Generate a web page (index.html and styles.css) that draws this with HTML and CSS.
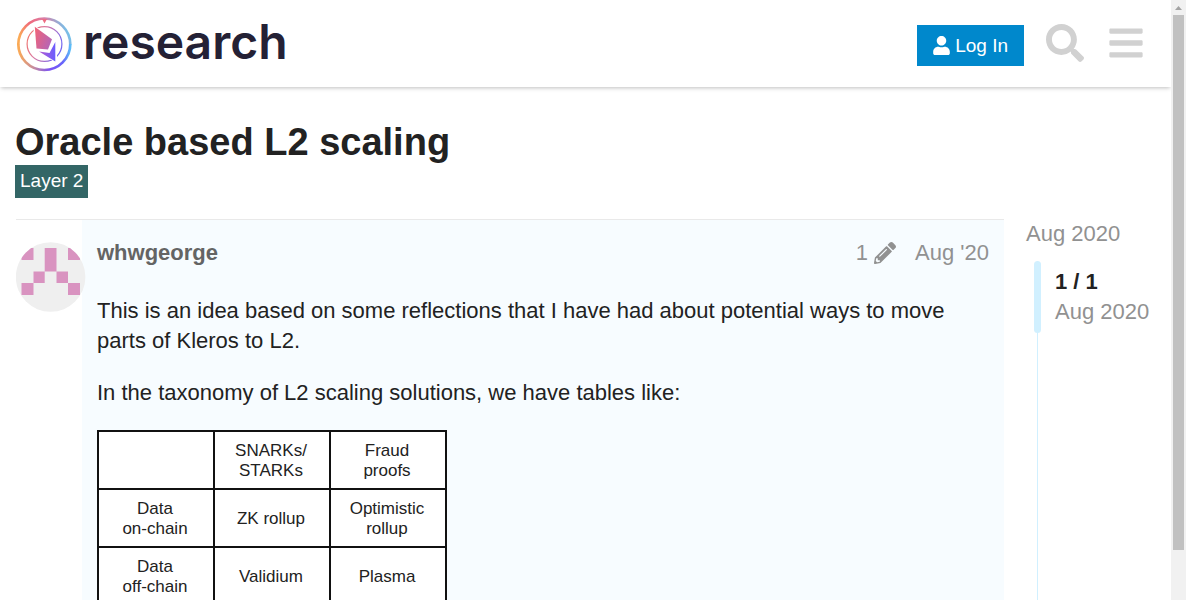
FILE: index.html
```html
<!DOCTYPE html>
<html lang="en">
<head>
<meta charset="utf-8">
<meta name="viewport" content="width=device-width, initial-scale=1">
<title>Oracle based L2 scaling - research</title>
<link rel="stylesheet" href="styles.css">
</head>
<body>
<div class="window">
  <div class="page">
    <header class="site-header">
      <a class="brand" href="#">
        <svg class="brand-mark" viewBox="0 0 56 56" aria-hidden="true">
          <defs>
            <linearGradient id="ring-warm" x1="0" y1="0.6" x2="1" y2="0.4">
              <stop offset="0" stop-color="#fbaa55"/>
              <stop offset="0.3" stop-color="#f0697c"/>
              <stop offset="0.6" stop-color="#d87fa8"/>
              <stop offset="1" stop-color="#62cdf6"/>
            </linearGradient>
            <linearGradient id="ring-cool" x1="0" y1="0.4" x2="1" y2="0.4">
              <stop offset="0" stop-color="#fbaa55"/>
              <stop offset="0.3" stop-color="#c58ca0"/>
              <stop offset="0.6" stop-color="#7a51f2"/>
              <stop offset="0.85" stop-color="#6a62fb"/>
              <stop offset="1" stop-color="#5cbcf8"/>
            </linearGradient>
            <linearGradient id="inner-ring" x1="0" y1="0" x2="1" y2="0.4">
              <stop offset="0" stop-color="#f5725f"/>
              <stop offset="0.5" stop-color="#d77aa6"/>
              <stop offset="1" stop-color="#7466ee"/>
            </linearGradient>
            <linearGradient id="gem" x1="0" y1="0.2" x2="1" y2="0.7">
              <stop offset="0" stop-color="#f0637a"/>
              <stop offset="1" stop-color="#b366b8"/>
            </linearGradient>
            <linearGradient id="gem-tail" x1="0" y1="0" x2="1" y2="0">
              <stop offset="0" stop-color="#b55dd0"/>
              <stop offset="1" stop-color="#6a5cff"/>
            </linearGradient>
          </defs>
          <path d="M2.300 28.500A26 26 0 1 1 54.300 28.500" fill="none" stroke="url(#ring-warm)" stroke-width="2.700"/>
          <path d="M2.300 28A26 26 0 0 0 54.300 28" fill="none" stroke="url(#ring-cool)" stroke-width="2.700"/>
          <path d="M26 3h5L28.500 7.500z" fill="#ee6c83"/>
          <circle cx="28.500" cy="28" r="17.400" fill="none" stroke="url(#inner-ring)" stroke-width="1.200"/>
          <path d="M17 9L38 21L34 34L41 25L41 47L20 35z" fill="#fff"/>
          <path d="M18.800 10.800L36 23.300L32 33.500L20.500 32.500z" fill="url(#gem)"/>
          <path d="M39.300 26V45.600L23 35.600L33.500 37z" fill="url(#gem-tail)"/>
        </svg>
        <span class="brand-name">research</span>
      </a>
      <nav class="header-tools" aria-label="Site">
        <button class="login" type="button">
          <svg class="login-icon" viewBox="0 0 448 512" aria-hidden="true"><path fill="currentColor" d="M224 256c70.700 0 128-57.300 128-128S294.700 0 224 0 96 57.300 96 128s57.300 128 128 128zm89.600 32h-16.700c-22.200 10.200-46.900 16-72.900 16s-50.600-5.800-72.900-16h-16.700C60.200 288 0 348.200 0 422.400V464c0 26.500 21.500 48 48 48h352c26.500 0 48-21.500 48-48v-41.600c0-74.200-60.200-134.400-134.400-134.400z"/></svg>
          <span>Log In</span>
        </button>
        <button class="tool" type="button" aria-label="Search">
          <svg class="search-icon" viewBox="0 0 512 512" aria-hidden="true"><path fill="currentColor" d="M505 442.700L405.300 343c-4.500-4.500-10.600-7-17-7H372c27.600-35.300 44-79.700 44-128C416 93.100 322.900 0 208 0S0 93.100 0 208s93.100 208 208 208c48.300 0 92.700-16.400 128-44v16.300c0 6.400 2.500 12.500 7 17l99.700 99.700c9.400 9.400 24.600 9.400 33.900 0l28.300-28.300c9.400-9.400 9.400-24.600.1-34zM208 336c-70.700 0-128-57.200-128-128 0-70.700 57.200-128 128-128 70.700 0 128 57.200 128 128 0 70.700-57.200 128-128 128z"/></svg>
        </button>
        <button class="tool" type="button" aria-label="Menu">
          <svg class="menu-icon" viewBox="0 0 448 512" aria-hidden="true"><path fill="currentColor" d="M16 132h416c8.800 0 16-7.200 16-16V76c0-8.800-7.200-16-16-16H16C7.200 60 0 67.200 0 76v40c0 8.800 7.200 16 16 16zm0 160h416c8.800 0 16-7.200 16-16v-40c0-8.800-7.200-16-16-16H16c-8.800 0-16 7.200-16 16v40c0 8.800 7.200 16 16 16zm0 160h416c8.800 0 16-7.200 16-16v-40c0-8.800-7.200-16-16-16H16c-8.800 0-16 7.200-16 16v40c0 8.800 7.200 16 16 16z"/></svg>
        </button>
      </nav>
    </header>

    <main class="topic">
      <div class="topic-title">
        <h1>Oracle based L2 scaling</h1>
        <a class="category" href="#">Layer 2</a>
      </div>
      <div class="topic-columns">
        <article class="post">
          <a class="avatar-link" href="#" aria-label="whwgeorge">
            <svg class="avatar" viewBox="0 0 70 70" aria-hidden="true">
              <clipPath id="avatar-clip"><circle cx="34.600" cy="35" r="34.800"/></clipPath>
              <g clip-path="url(#avatar-clip)">
                <path fill="#efefef" d="M0 0h70v70H0z"/>
                <path fill="#d993c0" d="M5.500 6h12v12h-12zM28.700 6h11.800v23.500h-11.800zM52 6h12v12h-12zM17.500 29.500h11.200v11.500h-11.200zM40.500 29.500h11.500v11.500h-11.500zM5.500 41h12v12h-12zM52 41h12v12h-12z"/>
              </g>
            </svg>
          </a>
          <div class="post-body">
            <div class="post-meta">
              <a class="author" href="#">whwgeorge</a>
              <button class="edits" type="button" aria-label="1 edit">
                <span>1</span>
                <svg class="edit-icon" viewBox="0 0 512 512" aria-hidden="true"><path fill="currentColor" d="M497.900 142.100l-46.100 46.100c-4.700 4.700-12.300 4.700-17 0l-111-111c-4.700-4.700-4.700-12.300 0-17l46.100-46.100c18.700-18.700 49.100-18.700 67.900 0l60.100 60.100c18.800 18.700 18.800 49.100 0 67.900zM284.200 99.800L21.600 362.400.4 483.900c-2.900 16.400 11.400 30.600 27.800 27.800l121.500-21.300 262.600-262.600c4.700-4.700 4.700-12.300 0-17l-111-111c-4.800-4.700-12.400-4.700-17.100 0zM124.100 339.900c-5.500-5.500-5.500-14.300 0-19.800l154-154c5.500-5.500 14.300-5.500 19.800 0s5.500 14.300 0 19.800l-154 154c-5.500 5.500-14.300 5.500-19.800 0zM88 424h48v36.300l-64.500 11.300-31.100-31.100L51.700 376H88v48z"/></svg>
              </button>
              <a class="post-date" href="#">Aug '20</a>
            </div>
            <div class="post-text">
              <p>This is an idea based on some reflections that I have had about potential ways to move parts of Kleros to L2.</p>
              <p>In the taxonomy of L2 scaling solutions, we have tables like:</p>
              <table class="taxonomy">
                <tr><td></td><th scope="col">SNARKs/<br>STARKs</th><th scope="col">Fraud<br>proofs</th></tr>
                <tr><th scope="row">Data<br>on-chain</th><td>ZK rollup</td><td>Optimistic<br>rollup</td></tr>
                <tr><th scope="row">Data<br>off-chain</th><td>Validium</td><td>Plasma</td></tr>
              </table>
            </div>
          </div>
        </article>
        <aside class="timeline" aria-label="Topic timeline">
          <a class="timeline-start" href="#">Aug 2020</a>
          <div class="timeline-track">
            <div class="timeline-handle"></div>
            <div class="timeline-position">
              <strong>1 / 1</strong>
              <span>Aug 2020</span>
            </div>
          </div>
        </aside>
      </div>
    </main>
  </div>
  <div class="scrollbar" aria-hidden="true">
    <svg class="scroll-arrow" viewBox="0 0 15 15"><path fill="#a3a3a3" d="M4 10L7.500 6L11 10z"/></svg>
    <div class="scroll-thumb"></div>
  </div>
</div>
</body>
</html>
```
FILE: styles.css
```css
* {
  box-sizing: border-box;
}

body {
  margin: 0;
  background: #fff;
  color: #222;
  font-family: "Liberation Sans", Arial, sans-serif;
  font-size: 22px;
  line-height: 30px;
}

a {
  color: inherit;
  text-decoration: none;
}

button {
  border: 0;
  padding: 0;
  background: none;
  color: inherit;
  font: inherit;
  cursor: pointer;
}

svg {
  display: block;
}

.window {
  display: grid;
  grid-template-columns: minmax(0, 1fr) 15px;
  height: 100vh;
  overflow: hidden;
}

.page {
  display: flex;
  flex-direction: column;
  min-height: 0;
  overflow: hidden;
}

/* Header */

.site-header {
  display: flex;
  flex-shrink: 0;
  align-items: flex-start;
  justify-content: space-between;
  padding: 16px 28px 15px 16px;
  box-shadow: 0 2px 4px -1px rgba(0, 0, 0, 0.25);
}

.brand {
  display: flex;
  align-items: center;
  gap: 11px;
}

.brand-mark {
  width: 56px;
  height: 56px;
  overflow: visible;
}

.brand-name {
  color: #242135;
  font-family: Inter, sans-serif;
  font-size: 48px;
  font-weight: 600;
  line-height: 50px;
  padding-bottom: 4px;
}

.header-tools {
  display: flex;
  align-items: flex-start;
  padding-top: 8px;
}

.login {
  display: flex;
  align-items: center;
  gap: 5px;
  margin-top: 1px;
  margin-right: 22px;
  padding: 8px 16px;
  background: #08c;
  color: #fff;
  font-size: 19px;
  line-height: 25px;
}

.login-icon {
  width: 17px;
  height: 19px;
}

.tool {
  color: #d1d1d1;
}

.tool + .tool {
  margin-left: 25px;
}

.search-icon {
  width: 38px;
  height: 38px;
}

.menu-icon {
  width: 34px;
  height: 38px;
}

/* Topic */

.topic {
  display: flex;
  flex: 1;
  flex-direction: column;
  min-height: 0;
  padding: 32px 0 0 15px;
}

.topic-title {
  display: flex;
  flex-direction: column;
  align-items: flex-start;
  padding-bottom: 21px;
}

h1 {
  margin: 0;
  font-size: 38px;
  line-height: 46px;
}

.category {
  padding: 3px 5px 5px;
  background: #366;
  color: #fff;
  font-size: 19px;
  line-height: 25px;
}

.topic-columns {
  display: grid;
  flex: 1;
  grid-template-columns: minmax(0, 1fr) 145px;
  gap: 22px;
  padding-left: 1px;
}

.post {
  display: grid;
  grid-template-columns: 66px minmax(0, 1fr);
  border-top: 1px solid #e9e9e9;
}

.avatar-link {
  padding-top: 22px;
  z-index: 1;
}

.avatar {
  width: 70px;
  height: 70px;
}

.post-body {
  padding: 18px 15px 0;
  background: #f7fcff;
}

.post-meta {
  display: flex;
  align-items: center;
  color: #919191;
}

.author {
  margin-right: auto;
  color: #646464;
  font-weight: 700;
}

.edits {
  display: flex;
  align-items: center;
  gap: 6px;
  margin-right: 19px;
}

.edit-icon {
  width: 22px;
  height: 22px;
}

.post-text {
  padding-top: 28px;
}

.post-text p {
  margin: 0 0 22px;
}

.taxonomy {
  border-collapse: collapse;
  background: #fff;
  font-size: 17px;
  line-height: 20px;
}

.taxonomy th,
.taxonomy td {
  width: 116px;
  height: 58px;
  padding: 1px 2px 0 0;
  border: 2px solid #111;
  font-weight: 400;
  text-align: center;
}

/* Timeline */

.timeline {
  display: flex;
  flex-direction: column;
  color: #919191;
}

.timeline-start {
  margin-bottom: 12px;
}

.timeline-track {
  display: flex;
  flex: 1;
  align-items: flex-start;
  gap: 14px;
  padding-left: 8px;
  background: linear-gradient(#d1f0ff, #d1f0ff) 11px 0 / 1px 100% no-repeat;
}

.timeline-handle {
  width: 7px;
  height: 72px;
  border-radius: 4px;
  background: #d1f0ff;
}

.timeline-position {
  display: flex;
  flex-direction: column;
  padding-top: 6px;
}

.timeline-position strong {
  color: #222;
}

/* Scrollbar */

.scrollbar {
  background: #f1f1f1;
}

.scroll-arrow {
  width: 15px;
  height: 15px;
}

.scroll-thumb {
  height: calc(90vh - 5px);
  margin: 0 2px;
  background: #c1c1c1;
}
```
